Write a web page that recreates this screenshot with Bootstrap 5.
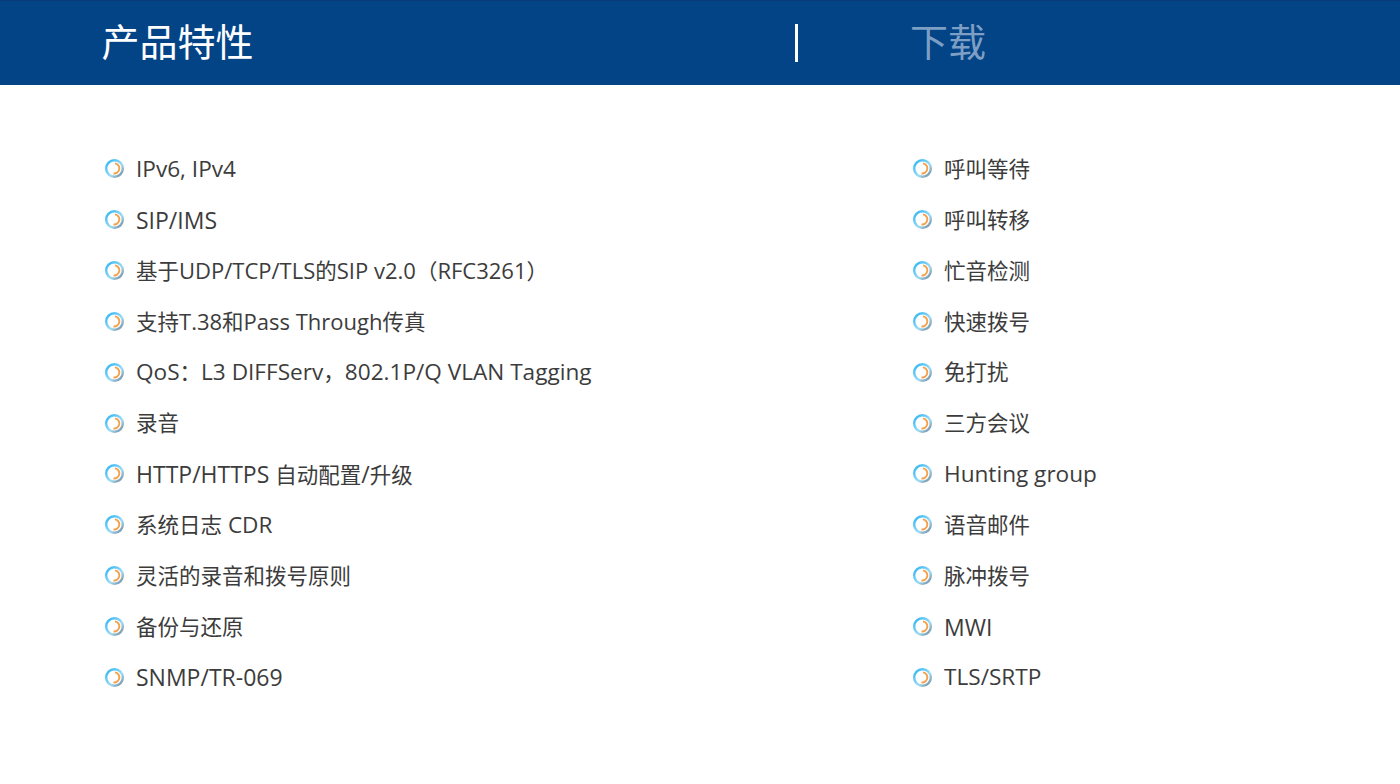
<!DOCTYPE html>
<html lang="zh"><head><meta charset="utf-8">
<link rel="stylesheet" href="https://cdn.jsdelivr.net/npm/bootstrap@5.3.0/dist/css/bootstrap.min.css">
<style>
body{font-family:"Open Sans","Noto Sans CJK SC",sans-serif;background:#fff;color:#333;overflow:hidden}
.tabbar{height:85px;background:#034487;border-top:1px solid #0a3a78}
.tab-a{width:693px;padding-left:101.5px;font-size:38px;line-height:81px;color:#fff;flex:none}
.tab-sep{width:3px;height:38px;background:#fff;margin-top:23px;margin-left:102px;flex:none}
.tab-b{padding-left:112px;font-size:38px;line-height:81px;color:#7e9fc4}
.cols{padding-top:59px}
.col-l{width:912px;padding-left:104px;flex:none}
.feat{height:50.85px;font-size:21.5px;line-height:50.85px;gap:11px;white-space:nowrap;color:#3c3c3c}
.feat svg{width:21px;height:21px;flex:none;margin-top:-1px}
.lat{font-size:22.6px}
.lat-s{font-size:22px}
.lat-l{font-size:23px}
</style></head><body>
<div class="tabbar d-flex">
<div class="tab-a">产品特性</div><div class="tab-sep"></div><div class="tab-b">下载</div></div>
<svg width="0" height="0" class="d-block"><defs><linearGradient id="rg" x1="0" y1="0" x2="1" y2="1"><stop offset="0" stop-color="#25b4f5"/><stop offset=".6" stop-color="#9fdcf5"/><stop offset="1" stop-color="#6f8496"/></linearGradient>
<symbol id="ring" viewBox="0 0 21 21"><circle cx="10.5" cy="10.5" r="8.3" fill="#fff" stroke="url(#rg)" stroke-width="2.4"/><path d="M11 5.4A5.1 5.1 0 0 1 9.5 15.5" fill="none" stroke="#f5a04a" stroke-width="1.9"/></symbol></defs></svg>
<div class="cols d-flex">
<div class="col-l">
<div class="feat d-flex align-items-center"><svg><use href="#ring"/></svg><span class="lat">IPv6, IPv4</span></div>
<div class="feat d-flex align-items-center"><svg><use href="#ring"/></svg><span class="lat-l">SIP/IMS</span></div>
<div class="feat d-flex align-items-center"><svg><use href="#ring"/></svg><span>基于<span class="lat-s">UDP/TCP/TLS</span>的<span class="lat-s">SIP v2.0</span>（<span class="lat-s">RFC3261</span>）</span></div>
<div class="feat d-flex align-items-center"><svg><use href="#ring"/></svg><span>支持<span class="lat-s">T.38</span>和<span class="lat-s">Pass Through</span>传真</span></div>
<div class="feat d-flex align-items-center"><svg><use href="#ring"/></svg><span><span class="lat">QoS</span>：<span class="lat">L3 DIFFServ</span>，<span class="lat">802.1P/Q VLAN Tagging</span></span></div>
<div class="feat d-flex align-items-center"><svg><use href="#ring"/></svg><span>录音</span></div>
<div class="feat d-flex align-items-center"><svg><use href="#ring"/></svg><span><span class="lat-l">HTTP/HTTPS </span>自动配置<span class="lat-l">/</span>升级</span></div>
<div class="feat d-flex align-items-center"><svg><use href="#ring"/></svg><span>系统日志<span class="lat"> CDR</span></span></div>
<div class="feat d-flex align-items-center"><svg><use href="#ring"/></svg><span>灵活的录音和拨号原则</span></div>
<div class="feat d-flex align-items-center"><svg><use href="#ring"/></svg><span>备份与还原</span></div>
<div class="feat d-flex align-items-center"><svg><use href="#ring"/></svg><span class="lat-l">SNMP/TR-069</span></div>
</div>
<div>
<div class="feat d-flex align-items-center"><svg><use href="#ring"/></svg><span>呼叫等待</span></div>
<div class="feat d-flex align-items-center"><svg><use href="#ring"/></svg><span>呼叫转移</span></div>
<div class="feat d-flex align-items-center"><svg><use href="#ring"/></svg><span>忙音检测</span></div>
<div class="feat d-flex align-items-center"><svg><use href="#ring"/></svg><span>快速拨号</span></div>
<div class="feat d-flex align-items-center"><svg><use href="#ring"/></svg><span>免打扰</span></div>
<div class="feat d-flex align-items-center"><svg><use href="#ring"/></svg><span>三方会议</span></div>
<div class="feat d-flex align-items-center"><svg><use href="#ring"/></svg><span class="lat">Hunting group</span></div>
<div class="feat d-flex align-items-center"><svg><use href="#ring"/></svg><span>语音邮件</span></div>
<div class="feat d-flex align-items-center"><svg><use href="#ring"/></svg><span>脉冲拨号</span></div>
<div class="feat d-flex align-items-center"><svg><use href="#ring"/></svg><span class="lat-l">MWI</span></div>
<div class="feat d-flex align-items-center"><svg><use href="#ring"/></svg><span class="lat">TLS/SRTP</span></div>
</div>
</div>
<script src="https://cdn.jsdelivr.net/npm/bootstrap@5.3.0/dist/js/bootstrap.bundle.min.js"></script>
</body></html>
